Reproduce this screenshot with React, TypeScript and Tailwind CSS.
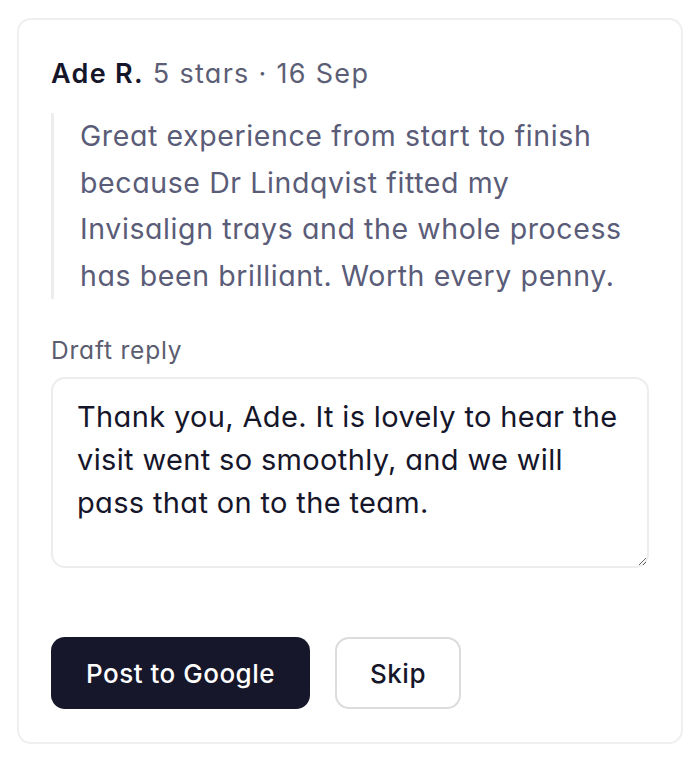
import React from 'react';

const review = {
    author: 'Ade R.',
    meta: '5 stars · 16 Sep',
    body: 'Great experience from start to finish because Dr Lindqvist fitted my Invisalign trays and the whole process has been brilliant. Worth every penny.',
    draft: 'Thank you, Ade. It is lovely to hear the visit went so smoothly, and we will pass that on to the team.',
};

export default function App() {
    return (
        <div
            className="min-h-screen bg-white p-[17px] pt-[18px]"
            style={{ fontFamily: 'Inter, "Noto Sans", sans-serif', fontFeatureSettings: '"cv11"' }}
        >
            <div className="rounded-[14px] border-2 border-[#efeff1] bg-white px-[32px] pt-[36px] pb-[33px]">
                <div className="text-[27px] leading-[36px] tracking-[1.3px]">
                    <span className="font-semibold text-[#16162a]">{review.author}</span>{' '}
                    <span className="text-[#5c5e76]">{review.meta}</span>
                </div>

                <blockquote className="mt-[21px] border-l-[3px] border-[#ededf0] pl-[26px] text-[28.5px] leading-[46.5px] tracking-[0.6px] text-[#5a5c78]">
                    {review.body}
                </blockquote>

                <label className="mt-[35px] block text-[24.5px] leading-[32px] tracking-[0.8px] text-[#5c5e70]">Draft reply</label>
                <textarea
                    defaultValue={review.draft}
                    className="mt-[11px] block h-[191px] w-full resize-y rounded-[14px] border-2 border-[#ededf0] px-[24px] py-[16px] text-[29px] leading-[43px] tracking-[0.35px] text-[#16162a] outline-none"
                />

                <div className="mt-[69px] flex gap-[25px]">
                    <button className="h-[72px] rounded-[14px] bg-[#17172b] px-[35px] text-[26px] font-medium tracking-[0.5px] text-white">
                        Post to Google
                    </button>
                    <button className="h-[72px] rounded-[14px] border-2 border-[#dcdcdf] bg-white px-[33px] text-[26px] font-medium tracking-[0.5px] text-[#16162a]">
                        Skip
                    </button>
                </div>
            </div>
        </div>
    );
}
